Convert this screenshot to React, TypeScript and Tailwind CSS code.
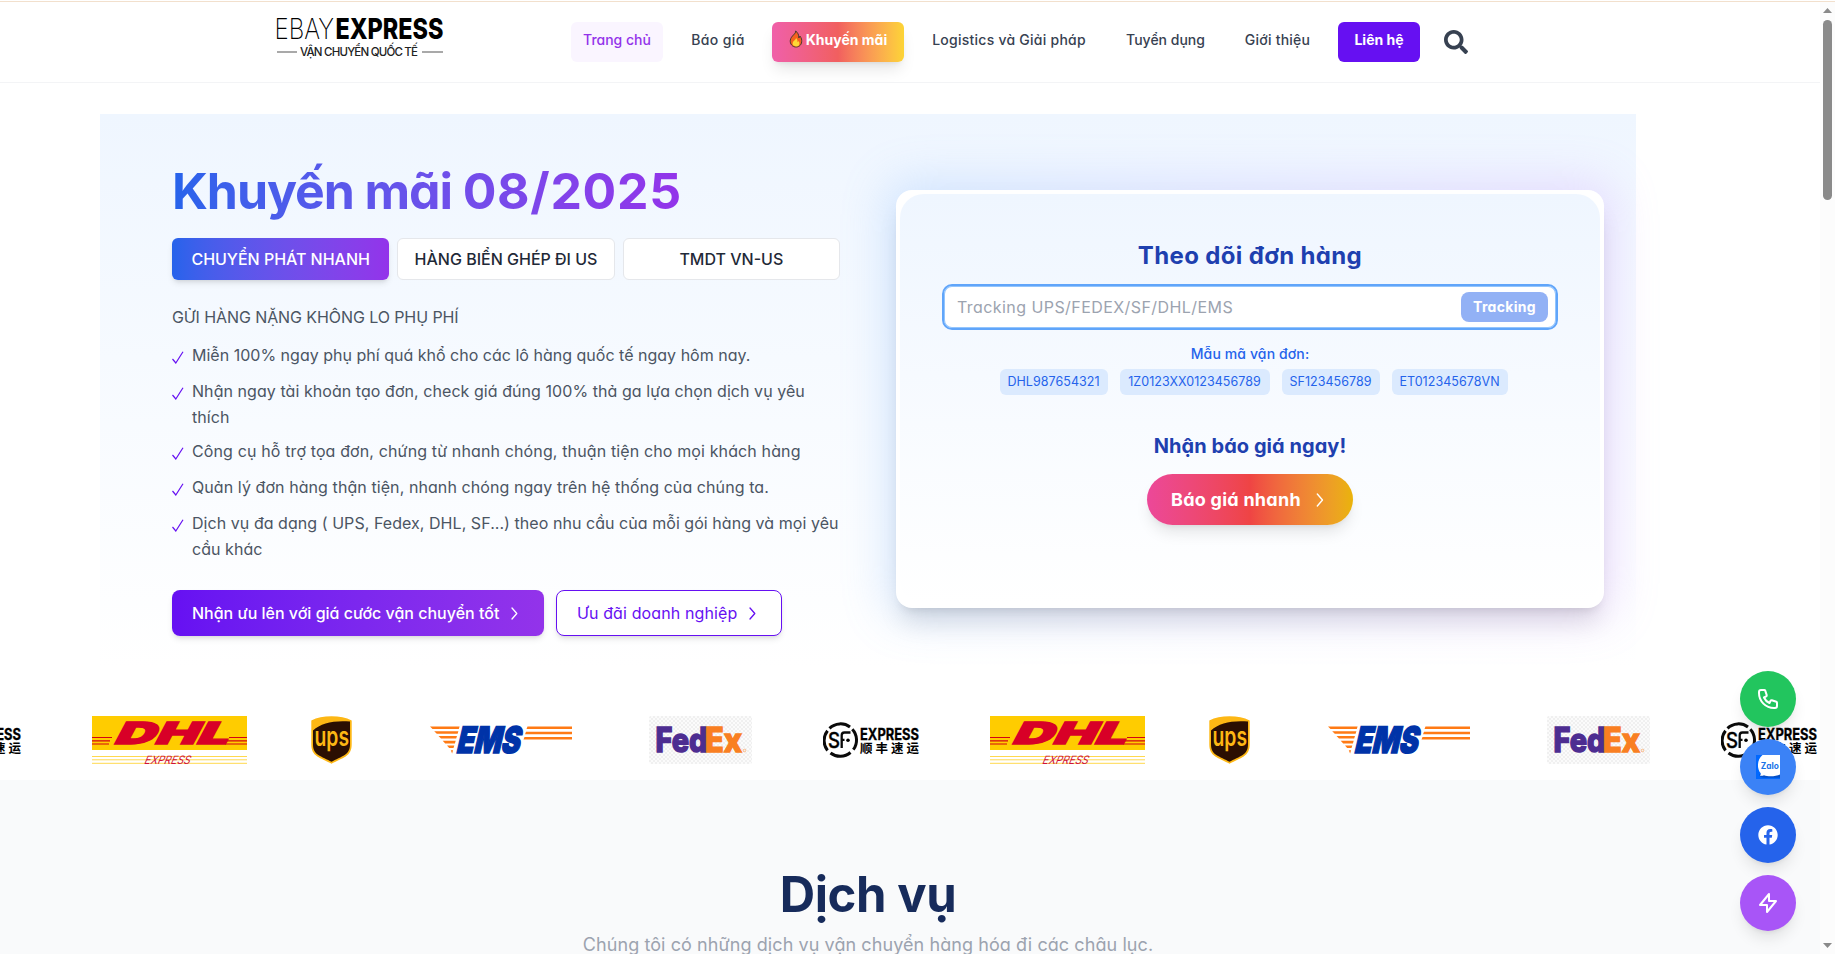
import type { ReactNode } from 'react';
import { FaFacebook, FaSearch } from 'react-icons/fa';

const navLinks = [
  { label: 'Trang chủ', cls: 'w-[92px] rounded-md bg-[#faf5ff] text-[#9333ea]' },
  { label: 'Báo giá', cls: 'ml-[28px] w-[54px] tracking-[0.4px] text-[#374151]' },
];

const navLinksAfter = [
  { label: 'Logistics và Giải pháp', cls: 'ml-[28px] w-[154px] tracking-[0.25px]' },
  { label: 'Tuyển dụng', cls: 'ml-[40px] w-[79px]' },
  { label: 'Giới thiệu', cls: 'ml-[39px] w-[67px] tracking-[0.25px]' },
];

const benefits = [
  { cls: 'tracking-[0.01px]', lines: ['Miễn 100% ngay phụ phí quá khổ cho các lô hàng quốc tế ngay hôm nay.'] },
  { cls: 'tracking-[0.06px]', lines: ['Nhận ngay tài khoản tạo đơn, check giá đúng 100% thả ga lựa chọn dịch vụ yêu', 'thích'] },
  { cls: 'tracking-[0.13px]', lines: ['Công cụ hỗ trợ tọa đơn, chứng từ nhanh chóng, thuận tiện cho mọi khách hàng'] },
  { cls: 'tracking-[0.08px]', lines: ['Quản lý đơn hàng thận tiện, nhanh chóng ngay trên hệ thống của chúng ta.'] },
  { cls: 'tracking-[0.05px]', lines: ['Dịch vụ đa dạng ( UPS, Fedex, DHL, SF...) theo nhu cầu của mỗi gói hàng và mọi yêu', 'cầu khác'] },
];

const samples = [
  { code: 'DHL987654321', cls: 'w-[108px]' },
  { code: '1Z0123XX0123456789', cls: 'w-[150px]' },
  { code: 'SF123456789', cls: 'w-[98px]' },
  { code: 'ET012345678VN', cls: 'w-[116px]' },
];

function Flame() {
  return (
    <svg viewBox="0 0 14 18" className="mr-[3px] h-[18px] w-[14px]">
      <path d="M6.600 1C7.200 4 2 5.600 1.300 10.200C.8 14 3.400 17 7 17s6-2.700 5.700-6.600c-.1-2-1-3.400-1.800-4.400-.1 1-.5 1.600-1.100 2C10 5 8.800 2.400 6.600 1Z" fill="#f4611e" stroke="#4a3a30" strokeWidth="1" />
      <path d="M7 8c.2 1.600-3.400 3-3.400 5.600C3.600 15.400 5 16.400 7 16.400s3.500-1.200 3.400-3c0-1-.5-1.800-1-2.300-.2.600-.5.900-.9 1.100C8.700 10.600 8.200 9 7 8Z" fill="#fdd835" />
    </svg>
  );
}

function Chevron({ className }: { className: string }) {
  return (
    <svg viewBox="0 0 7 13" className={className} fill="none" stroke="currentColor" strokeWidth="1.300" strokeLinecap="round" strokeLinejoin="round">
      <path d="M1 1l4.800 5.500L1 12" />
    </svg>
  );
}

function Check() {
  return (
    <svg viewBox="0 0 12 13" className="mt-[9px] h-[13px] w-[12px] shrink-0" fill="none" stroke="#6610f2" strokeWidth="1.200">
      <path d="M.5 8L3.800 12 11 .7" />
    </svg>
  );
}

function BrandLogo() {
  return (
    <svg viewBox="0 0 168 44" className="h-[44px] w-[168px] overflow-visible font-['Inter']">
      <text x="-1.500" y="22.500" fontSize="28.500" fontWeight="200" textLength="59.500" lengthAdjust="spacingAndGlyphs">EBAY</text>
      <text x="59.500" y="22.500" fontSize="28.500" fontWeight="800" textLength="108" lengthAdjust="spacingAndGlyphs">EXPRESS</text>
      <text x="24" y="40" fontSize="11.500" fontWeight="500" textLength="118" lengthAdjust="spacing" fill="#222">VẬN CHUYỂN QUỐC TẾ</text>
      <path d="M1 36h20M146 36h21" stroke="#555" strokeWidth="1.200" />
    </svg>
  );
}

function DhlLogo() {
  return (
    <svg viewBox="0 0 155 48" className="h-[48px] w-[155px] shrink-0 font-['Inter']">
      <rect width="155" height="34" fill="#ffcc00" />
      <path d="M0 21.500h20M0 24.800h18M0 28h17M137 21.500h18M135 24.800h20M133 28h22" stroke="#d40511" strokeWidth="1.200" />
      <text transform="translate(20.500 28) skewX(-28)" fontSize="30.500" fontWeight="900" textLength="114" lengthAdjust="spacingAndGlyphs" fill="#d80027" stroke="#d80027" strokeWidth="1.400">DHL</text>
      <path d="M0 40.500h155M0 43.800h155M0 47.300h155" stroke="#ffd94d" strokeWidth="1" />
      <text transform="translate(51.500 48) skewX(-22)" fontSize="11.500" fontWeight="400" textLength="46" lengthAdjust="spacingAndGlyphs" fill="#d0103a">EXPRESS</text>
    </svg>
  );
}

function UpsLogo() {
  return (
    <svg viewBox="0 0 41 48" className="h-[48px] w-[41px] shrink-0 font-['Inter']">
      <path d="M20.500.2c-8 0-14.500 1.300-20.200 4.300v23.800c0 5.600 1.800 9.400 6 12.200 3.200 2.100 10 5 14.200 7.200 4.200-2.200 11-5.100 14.200-7.200 4.200-2.800 6-6.600 6-12.200V4.500C35 1.500 28.500.2 20.500.2Z" fill="#fdb714" />
      <path d="M2 14.500C10 7 23 4.200 39 5.500v22.800c0 5-1.500 8.300-5.300 10.800-3 2-9.200 4.600-13.200 6.700-4-2.100-10.200-4.700-13.200-6.700C3.500 36.600 2 33.300 2 28.300Z" fill="#2b0f02" />
      <text x="3.500" y="29.500" fontSize="23" fontWeight="600" textLength="34.500" lengthAdjust="spacingAndGlyphs" fill="#fdb714" transform="translate(0 -3.500) scale(1 1.150)">ups</text>
    </svg>
  );
}

function EmsLogo() {
  return (
    <svg viewBox="0 0 142 48" className="h-[48px] w-[142px] shrink-0 font-['Inter']">
      <g fill="#ff7a14">
        <path d="M0 10.500h29.600l-.8 2.600H2.500ZM4.200 15.200h24.200l-.8 2.600H6.800ZM8.500 20h18.500l-.8 2.600H11ZM12.700 24.800h13l-.8 2.600H15.200ZM17 29.500h7.300l-.8 2.600h-4.400ZM20.800 34.200h2.300l-1 3.300Z" />
        <path d="M97.500 10.500H142v2.600H96.500ZM96 15.700h46v2.600H95ZM94.500 21H142v2.600H93.500Z" />
      </g>
      <text transform="translate(25.500 37.200) skewX(-13)" fontSize="36.500" fontWeight="900" textLength="63.500" lengthAdjust="spacingAndGlyphs" fill="#0033a8" stroke="#0033a8" strokeWidth="1.500">EMS</text>
    </svg>
  );
}

function FedexLogo() {
  return (
    <svg viewBox="0 0 103 48" className="h-[48px] w-[103px] shrink-0 font-['Inter']">
      <defs>
        <pattern id="checker" width="4" height="4" patternUnits="userSpaceOnUse">
          <rect width="4" height="4" fill="#fbfbfb" />
          <path d="M0 0h2v2H0ZM2 2h2v2H2Z" fill="#f0f0f0" />
        </pattern>
      </defs>
      <rect width="103" height="48" rx="2" fill="url(#checker)" />
      <text x="6.500" y="35.700" fontSize="33.500" fontWeight="800" textLength="52" lengthAdjust="spacingAndGlyphs" fill="#4d2d91" stroke="#4d2d91" strokeWidth="1.400">Fed</text>
      <text x="56" y="35.700" fontSize="33.500" fontWeight="800" textLength="37" lengthAdjust="spacingAndGlyphs" fill="#f97f22" stroke="#f97f22" strokeWidth="1.400">Ex</text>
      <circle cx="95.500" cy="34.500" r="1.300" fill="none" stroke="#f9a96a" strokeWidth=".8" />
    </svg>
  );
}

function SfLogo() {
  return (
    <svg viewBox="0 0 98 48" className="h-[48px] w-[98px] shrink-0 font-['Inter']">
      <g fill="none" stroke="#0a0a0a" strokeWidth="3">
        <path d="M6.500 12.300A15.900 15.900 0 0 1 27 11" />
        <path d="M29.300 13.300a15.900 15.900 0 0 1 1 20.400" />
        <path d="M27.500 36.500A15.900 15.900 0 0 1 7.500 37" />
        <path d="M4.500 34.500A15.900 15.900 0 0 1 4.500 14.800" />
      </g>
      <text x="5" y="32" fontSize="21.500" fontWeight="500" textLength="12" lengthAdjust="spacingAndGlyphs" stroke="#0a0a0a" strokeWidth=".4">S</text>
      <path d="M18.700 32V19.200q0-2.700 2.700-2.700h6.100M18.700 23.800h2.800" fill="none" stroke="#0a0a0a" strokeWidth="2.300" />
      <circle cx="25" cy="24.200" r="1.800" />
      <text x="37" y="23.500" fontSize="15.500" fontWeight="700" textLength="59" lengthAdjust="spacingAndGlyphs" stroke="#0a0a0a" strokeWidth=".3">EXPRESS</text>
      <text x="37" y="36.700" fontSize="12.500" fontWeight="700" textLength="59" lengthAdjust="spacing" className="font-['Noto_Sans_CJK_SC']">顺丰速运</text>
    </svg>
  );
}

function ZaloIcon() {
  return (
    <svg viewBox="0 0 24 24" className="size-6 font-['Inter']">
      <rect width="24" height="24" fill="#0068ff" />
      <path d="M3 19.500Q4 23 9 22.800h15V14Z" fill="#0550c8" />
      <path d="M6.500 0H24v19.500C20 21.500 12 22 8 20.200c-1.300.6-3 .7-4.300.3.900-.5 1.200-1.200 1-2.300C.9 14 .7 5 6.500 0Z" fill="#fff" />
      <text x="4.800" y="13.800" fontSize="8.300" fontWeight="700" textLength="18" lengthAdjust="spacingAndGlyphs" fill="#1a73e8">Zalo</text>
    </svg>
  );
}

function OutlineIcon({ d }: { d: string }) {
  return (
    <svg viewBox="0 0 24 24" className="size-6" fill="none" stroke="currentColor" strokeWidth="2" strokeLinecap="round" strokeLinejoin="round">
      <path d={d} />
    </svg>
  );
}

function Floating({ className, children }: { className: string; children: ReactNode }) {
  return <a className={`flex size-14 items-center justify-center rounded-full text-white shadow-lg ${className}`}>{children}</a>;
}

function LogoSet() {
  return (
    <div className="flex w-[898px] shrink-0">
      <SfLogo />
      <div className="ml-[69px] flex"><DhlLogo /></div>
      <div className="ml-[64px] flex"><UpsLogo /></div>
      <div className="ml-[78px] flex"><EmsLogo /></div>
      <div className="ml-[77px] flex"><FedexLogo /></div>
    </div>
  );
}

function Header() {
  return (
    <header className="h-[83px] shrink-0 border-b border-[#f3f4f6] bg-white pt-px">
      <div className="h-px bg-[#f2e0cd]" />
      <div className="flex pl-[276px]">
        <div className="mt-[13.500px] h-[44px] w-[168px]"><BrandLogo /></div>
        <nav className="mt-5 flex pl-[127px] text-sm font-medium whitespace-nowrap">
          {navLinks.map((l) => (
            <a key={l.label} className={`flex h-10 justify-center pt-2 ${l.cls}`}>{l.label}</a>
          ))}
          <a className="ml-[27px] flex h-10 w-[132px] justify-center rounded-md bg-linear-to-r from-[#f05fa9] via-[#f15f5f] to-[#fcd435] pt-2 font-bold text-white shadow-lg">
            <Flame />Khuyến mãi
          </a>
          {navLinksAfter.map((l) => (
            <a key={l.label} className={`flex h-10 justify-center pt-2 text-[#374151] ${l.cls}`}>{l.label}</a>
          ))}
          <a className="ml-[27px] flex h-10 w-[82px] justify-center rounded-md bg-[#6610f2] pt-2 font-bold text-white">Liên hệ</a>
          <FaSearch className="mt-2 ml-6 size-6 text-[#374151]" />
        </nav>
      </div>
    </header>
  );
}

function Promo() {
  return (
    <div className="w-[668px] pt-[47px] whitespace-nowrap">
      <h1 className="w-fit bg-linear-to-r from-[#2563eb] to-[#9333ea] bg-clip-text text-[50px] leading-[60px] font-bold tracking-[-1.1px] text-transparent">
        Khuyến mãi <span className="tracking-[0.7px]">08/2025</span>
      </h1>
      <div className="mt-[17px] grid h-[42px] grid-cols-3 gap-2 font-medium text-[#1f2937]">
        <button className="rounded-md bg-linear-to-r from-[#2563eb] to-[#9333ea] tracking-[-0.03px] text-white shadow-md">CHUYỂN PHÁT NHANH</button>
        <button className="rounded-md border border-[#e5e7eb] bg-white">HÀNG BIỂN GHÉP ĐI US</button>
        <button className="rounded-md border border-[#e5e7eb] bg-white">TMDT VN-US</button>
      </div>
      <p className="mt-6 leading-[26px] tracking-[-0.09px] text-[#4b5563]">GỬI HÀNG NẶNG KHÔNG LO PHỤ PHÍ</p>
      <ul className="mt-3 flex flex-col gap-2 leading-[26px] text-[#4b5563]">
        {benefits.map((b) => (
          <li key={b.lines[0]} className={`flex min-h-7 gap-2 ${b.cls}`}>
            <Check />
            <div>{b.lines.map((t) => <p key={t}>{t}</p>)}</div>
          </li>
        ))}
      </ul>
      <div className="mt-7 flex h-[46px] gap-3">
        <button className="flex w-[372px] items-center rounded-lg bg-linear-to-r from-[#6610f2] to-[#9333ea] pl-5 font-medium text-white shadow-md">
          Nhận ưu lên với giá cước vận chuyển tốt<Chevron className="ml-3 h-[13px] w-[7px]" />
        </button>
        <button className="flex w-[226px] items-center rounded-lg border border-[#6610f2] bg-white pl-5 tracking-[0.12px] text-[#6610f2] shadow-md">
          Ưu đãi doanh nghiệp<Chevron className="ml-3 h-[13px] w-[7px]" />
        </button>
      </div>
    </div>
  );
}

function TrackingCard() {
  return (
    <div className="relative mt-[76px] ml-[56px] h-[418px] w-[708px]">
      <div className="absolute -inset-2 rounded-2xl bg-linear-to-r from-[#60a5fa] to-[#c084fc] opacity-25 blur-xl" />
      <div className="relative h-full rounded-2xl bg-white p-1 shadow-[0_20px_25px_-5px_rgb(0_0_0/0.1),0_8px_10px_-6px_rgb(0_0_0/0.1)]">
        <div className="flex h-full flex-col items-center rounded-3xl bg-linear-to-b from-[#eff6ff] to-white px-[42px] pt-[46px] whitespace-nowrap">
          <h2 className="text-2xl leading-8 font-bold tracking-[0.35px] text-[#1e40af]">Theo dõi đơn hàng</h2>
          <div className="mt-3 flex h-[46px] w-full items-center justify-between rounded-[10px] border-2 border-[#60a5fa] bg-white pr-2 pl-[13px] shadow-[inset_0_0_0_1px_#93c5fd]">
            <span className="tracking-[0.43px] text-[#9ca3af]">Tracking UPS/FEDEX/SF/DHL/EMS</span>
            <button className="h-[30px] w-[87px] rounded-lg bg-[#92b1f5] text-sm font-bold tracking-[0.3px] text-white">Tracking</button>
          </div>
          <p className="mt-[14px] text-sm leading-5 font-medium tracking-[0.12px] text-[#2563eb]">Mẫu mã vận đơn:</p>
          <div className="mt-[5px] ml-[7px] flex gap-3 text-[12.500px] tracking-[0.05px] text-[#2563eb]">
            {samples.map((s) => (
              <span key={s.code} className={`flex h-[26px] items-center justify-center rounded-md bg-[#dbeafe] ${s.cls}`}>{s.code}</span>
            ))}
          </div>
          <h3 className="mt-[37px] text-xl leading-7 font-bold tracking-[0.05px] text-[#1e40af]">Nhận báo giá ngay!</h3>
          <button className="mt-[14px] flex h-[51px] w-[206px] shrink-0 items-center rounded-full bg-linear-to-r from-[#ec4899] via-[#ef4444] to-[#eab308] pl-6 text-lg font-bold tracking-[0.25px] text-white shadow-lg">
            Báo giá nhanh<Chevron className="ml-[15px] h-[14px] w-[8px]" />
          </button>
        </div>
      </div>
    </div>
  );
}

function Scrollbar() {
  return (
    <div className="flex w-[15px] shrink-0 flex-col items-center bg-[#fcfcfc]">
      <div className="h-[2px] w-full border-b border-[#f2e0cd] bg-white" />
      <svg viewBox="0 0 9 5" className="mt-[6px] h-[5px] w-[9px]"><path d="M4.500 0L9 5H0Z" fill="#8a8a8a" /></svg>
      <div className="mt-[7px] h-[180px] w-[9px] rounded-full bg-[#8a8a8a]" />
      <svg viewBox="0 0 9 5" className="mt-auto mb-[6px] h-[5px] w-[9px]"><path d="M0 0h9L4.500 5Z" fill="#8a8a8a" /></svg>
    </div>
  );
}

export default function App() {
  return (
    <div className="flex h-[954px] overflow-hidden bg-white font-['Inter','Noto_Sans',sans-serif] [font-feature-settings:'cv11']">
      <div className="flex h-full w-[1820px] shrink-0 flex-col overflow-hidden">
        <Header />
        <section className="mt-[31px] ml-[100px] flex h-[554px] w-[1536px] shrink-0 bg-linear-to-b from-[#eff6ff] to-white pl-[72px]">
          <Promo />
          <TrackingCard />
        </section>
        <div className="mt-[31px] flex h-[81px] w-full shrink-0 overflow-hidden pt-[17px]">
          <div className="-ml-[75px] flex shrink-0">
            <LogoSet />
            <LogoSet />
            <SfLogo />
          </div>
        </div>
        <section className="min-h-0 grow overflow-hidden bg-[#f9fafb] pt-[91px] pr-[84px] text-center">
          <h2 className="text-[49px] leading-[48px] font-bold tracking-[-0.4px] text-[#172b5b]">Dịch vụ</h2>
          <p className="mt-3 text-lg leading-7 tracking-[0.08px] whitespace-nowrap text-[#9ca3af]">Chúng tôi có những dịch vụ vận chuyển hàng hóa đi các châu lục.</p>
        </section>
      </div>
      <Scrollbar />
      <div className="fixed top-[671px] right-[39px] flex flex-col gap-3">
        <Floating className="bg-[#22c55e]">
          <OutlineIcon d="M3 5a2 2 0 012-2h3.280a1 1 0 01.948.684l1.498 4.493a1 1 0 01-.502 1.210l-2.257 1.130a11.042 11.042 0 005.516 5.516l1.130-2.257a1 1 0 011.210-.502l4.493 1.498a1 1 0 01.684.949V19a2 2 0 01-2 2h-1C9.716 21 3 14.284 3 6V5z" />
        </Floating>
        <Floating className="bg-[#3b82f6]"><ZaloIcon /></Floating>
        <Floating className="bg-[#2563eb]"><FaFacebook className="size-5" /></Floating>
        <Floating className="bg-[#a855f7]"><OutlineIcon d="M13 10V3L4 14h7v7l9-11h-7z" /></Floating>
      </div>
    </div>
  );
}
